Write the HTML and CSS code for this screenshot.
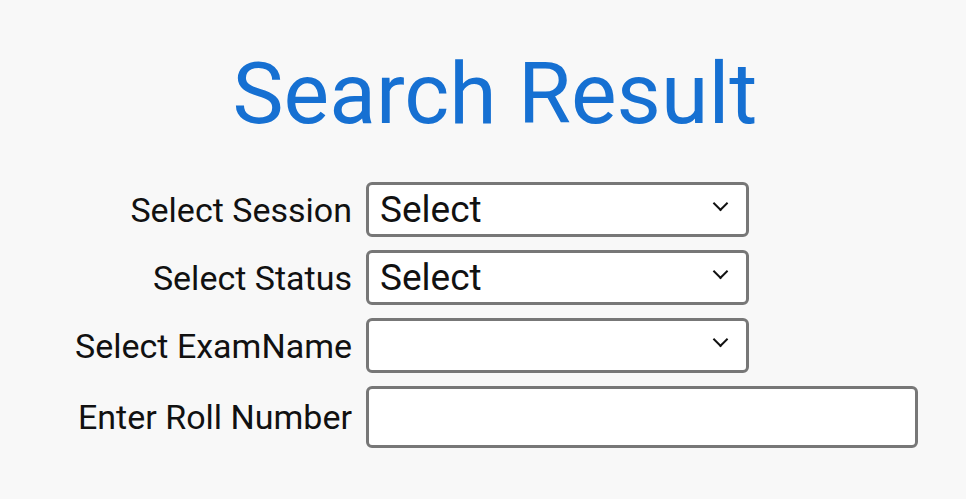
FILE: index.html
```html
<!DOCTYPE html>
<html lang="en">
<head>
<meta charset="utf-8">
<title>Search Result</title>
<link rel="stylesheet" href="styles.css">
</head>
<body>
<main class="page">
  <h1 class="title">Search Result</h1>
  <form class="form">
    <label class="label" for="session">Select Session</label>
    <span class="select-wrap">
      <select id="session" class="select"><option>Select</option></select>
    </span>
    <label class="label" for="status">Select Status</label>
    <span class="select-wrap">
      <select id="status" class="select"><option>Select</option></select>
    </span>
    <label class="label" for="exam">Select ExamName</label>
    <span class="select-wrap">
      <select id="exam" class="select"><option></option></select>
    </span>
    <label class="label" for="roll">Enter Roll Number</label>
    <input id="roll" class="input" type="text">
  </form>
</main>
</body>
</html>
```
FILE: styles.css
```css
html, body {
  margin: 0;
  padding: 0;
  background: #f8f8f8;
}
body {
  font-family: Roboto, "Noto Sans", sans-serif;
  color: #111;
}
.page {
  padding-top: 43px;
}
.title {
  margin: 0;
  padding-left: 24px;
  text-align: center;
  font-weight: 400;
  font-size: 86px;
  line-height: 101px;
  color: #1670d2;
}
.form {
  display: grid;
  grid-template-columns: 352px auto;
  column-gap: 14px;
  row-gap: 13px;
  align-items: center;
  justify-items: start;
  margin-top: 38px;
}
.label {
  justify-self: end;
  font-size: 34px;
  color: #111;
}
.select-wrap {
  position: relative;
  display: block;
}
.select-wrap::after {
  content: "";
  position: absolute;
  right: 23px;
  top: 16px;
  width: 11px;
  height: 11px;
  box-sizing: border-box;
  border-right: 2px solid #111;
  border-bottom: 2px solid #111;
  transform: rotate(45deg);
  pointer-events: none;
}
.select {
  appearance: none;
  -webkit-appearance: none;
  -moz-appearance: none;
  display: block;
  width: 383px;
  height: 55px;
  box-sizing: border-box;
  border: 3px solid #777;
  border-radius: 6px;
  background: #fff;
  padding: 0 40px 0 11px;
  font-family: Roboto, "Noto Sans", sans-serif;
  font-size: 37px;
  color: #111;
  outline: none;
}
.input {
  display: block;
  width: 552px;
  height: 62px;
  box-sizing: border-box;
  border: 3px solid #777;
  border-radius: 6px;
  background: #fff;
  padding: 0 12px;
  font-family: Roboto, "Noto Sans", sans-serif;
  font-size: 36px;
  outline: none;
}
```
